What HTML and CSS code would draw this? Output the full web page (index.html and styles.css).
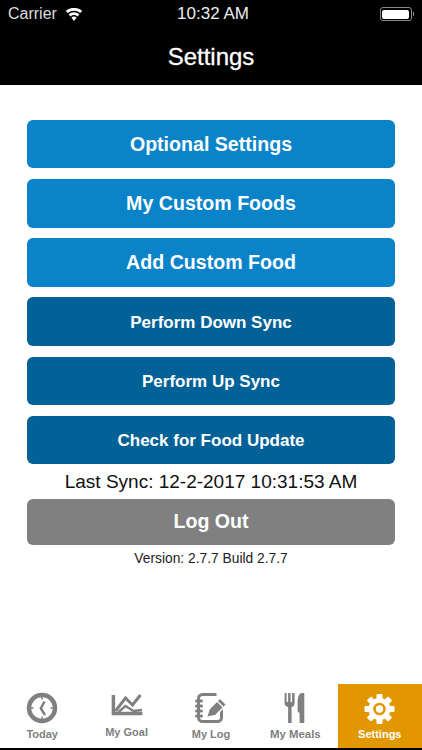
FILE: index.html
```html
<!DOCTYPE html>
<html lang="en">
<head>
    <meta charset="UTF-8">
    <meta name="viewport" content="width=device-width, initial-scale=1">
    <title>Settings</title>
    <link rel="stylesheet" href="styles.css">
</head>
<body>
    <div class="app">
        <header class="top-bar">
            <div class="status-bar">
                <div class="status-left">
                    <span>Carrier</span>
                    <svg class="wifi" viewBox="0 0 18 13" width="18" height="13">
                        <path fill="#fff" d="M9 13l-2.700-3.400a4.400 4.400 0 0 1 5.400 0z"/>
                        <path fill="#fff" d="M5.400 8.400L3.600 6.200a8.600 8.600 0 0 1 10.800 0l-1.800 2.200a5.800 5.800 0 0 0-7.200 0z"/>
                        <path fill="#fff" d="M2.700 5L.8 2.800a12.800 12.800 0 0 1 16.400 0L15.300 5a9.900 9.900 0 0 0-12.600 0z"/>
                    </svg>
                </div>
                <span class="status-time">10:32 AM</span>
                <div class="status-right">
                    <div class="battery"><div class="battery-level"></div></div>
                    <div class="battery-cap"></div>
                </div>
            </div>
            <h1 class="page-title">Settings</h1>
        </header>

        <main class="content">
            <button type="button" class="btn btn-light">Optional Settings</button>
            <button type="button" class="btn btn-light">My Custom Foods</button>
            <button type="button" class="btn btn-light">Add Custom Food</button>
            <button type="button" class="btn btn-dark">Perform Down Sync</button>
            <button type="button" class="btn btn-dark">Perform Up Sync</button>
            <button type="button" class="btn btn-dark">Check for Food Update</button>
            <p class="last-sync">Last Sync: 12-2-2017 10:31:53 AM</p>
            <button type="button" class="btn btn-grey">Log Out</button>
            <p class="version">Version: 2.7.7 Build 2.7.7</p>
        </main>

        <nav class="tab-bar">
            <div class="tab">
                <svg class="tab-icon" viewBox="0 0 32 32" width="32" height="32">
                    <circle cx="16" cy="16" r="13" fill="none" stroke="#808080" stroke-width="4.500"/>
                    <path fill="none" stroke="#808080" stroke-width="2.500" d="M18.500 9.500L14.800 16.500 19 23"/>
                    <path fill="none" stroke="#808080" stroke-width="1.500" d="M16 5v2.500M16 24.500V27M5 16h2.500M24.500 16H27"/>
                </svg>
                <span class="tab-label">Today</span>
            </div>
            <div class="tab tab-goal">
                <svg class="tab-icon" viewBox="0 0 32 32" width="32" height="32">
                    <path fill="none" stroke="#808080" stroke-width="3.500" d="M2.400 3v18.500h29"/>
                    <path fill="none" stroke="#808080" stroke-width="3" d="M4.500 19L14.500 6l7 7 8-10"/>
                    <path fill="none" stroke="#808080" stroke-width="2.500" d="M7.500 20l7-6 8 5 8.500-1"/>
                </svg>
                <span class="tab-label">My Goal</span>
            </div>
            <div class="tab">
                <svg class="tab-icon" viewBox="0 0 32 32" width="32" height="32">
                    <path fill="none" stroke="#808080" stroke-width="3" d="M26.500 17v8.500a4 4 0 0 1-4 4h-15a4 4 0 0 1-4-4v-19a4 4 0 0 1 4-4h14"/>
                    <path fill="none" stroke="#808080" stroke-width="3" stroke-linecap="round" d="M1.500 9h5M1.500 14h5M1.500 19h5M1.500 24h5"/>
                    <path fill="#808080" stroke="#fff" stroke-width="1.500" d="M11.500 25.500l2.500-8.500L25 6l6.500 6.500L20.500 23.500z"/>
                    <path fill="none" stroke="#fff" stroke-width="1.200" d="M22 9l6.500 6.500"/>
                </svg>
                <span class="tab-label">My Log</span>
            </div>
            <div class="tab">
                <svg class="tab-icon" viewBox="0 0 32 32" width="32" height="32">
                    <path fill="#808080" d="M5.600 1h2v9h1.500V1h2.500v9h1.500V1h2.500v10.500c0 2-1 3-3 3.500v16H9.100V15c-2-.5-3.500-1.500-3.500-3.500z"/>
                    <path fill="#808080" d="M23 1c-3.500 0-4.400 5-4.400 11v7l2 2.500V31h4.700V1z"/>
                </svg>
                <span class="tab-label tab-label-wide">My Meals</span>
            </div>
            <div class="tab tab-active">
                <svg class="tab-icon" viewBox="0 0 32 32" width="32" height="32">
                    <g fill="#fff">
                        <circle cx="15.500" cy="17" r="11"/>
                        <rect x="12.500" y="2" width="6" height="30" rx="1"/>
                        <rect x="12.500" y="2" width="6" height="30" rx="1" transform="rotate(45 15.500 17)"/>
                        <rect x="12.500" y="2" width="6" height="30" rx="1" transform="rotate(90 15.500 17)"/>
                        <rect x="12.500" y="2" width="6" height="30" rx="1" transform="rotate(135 15.500 17)"/>
                    </g>
                    <circle cx="15.500" cy="17" r="5" fill="#fff" stroke="#e29700" stroke-width="2.600"/>
                </svg>
                <span class="tab-label">Settings</span>
            </div>
        </nav>
    </div>
</body>
</html>
```

FILE: styles.css
```css
* {
    box-sizing: border-box;
}
body {
    margin: 0;
    font-family: "Liberation Sans", Arial, sans-serif;
    background-color: #fff;
}
.app {
    display: flex;
    flex-direction: column;
    width: 422px;
    height: 750px;
    overflow: hidden;
    border-bottom: 2px solid #000;
}
.top-bar {
    height: 85px;
    padding: 0 8px;
    background-color: #000;
    color: #fff;
}
.status-bar {
    display: flex;
    align-items: center;
    justify-content: space-between;
    height: 28px;
    font-size: 16px;
}
.status-left {
    display: flex;
    align-items: center;
    gap: 8px;
    width: 100px;
    color: #ddd;
}
.status-time {
    margin-left: 4px;
    font-size: 17px;
    color: #eee;
}
.status-right {
    display: flex;
    align-items: center;
    justify-content: flex-end;
    width: 100px;
}
.battery {
    width: 32px;
    height: 14px;
    padding: 1.500px;
    border: 1px solid #888;
    border-radius: 3px;
}
.battery-level {
    height: 100%;
    background-color: #fff;
    border-radius: 2px;
}
.battery-cap {
    width: 1px;
    height: 4px;
    margin-left: 1px;
    background-color: #888;
}
.page-title {
    margin: 0;
    padding-top: 4px;
    font-size: 24px;
    font-weight: 400;
    line-height: 50px;
    text-align: center;
    -webkit-text-stroke: 0.3px #fff;
}
.content {
    flex: 1;
    display: flex;
    flex-direction: column;
    padding: 34.800px 27px 0;
}
.btn {
    flex: none;
    height: 48.700px;
    margin-bottom: 10.500px;
    padding: 0;
    border: none;
    border-radius: 6px;
    color: #fff;
    font-family: inherit;
    font-weight: 700;
    font-size: 19.600px;
}
.btn-light {
    background-color: #0a83c9;
}
.btn-dark {
    padding-top: 2px;
    background-color: #026197;
    font-size: 17px;
}
.btn-grey {
    height: 46px;
    margin-bottom: 0;
    background-color: #808080;
}
.last-sync {
    margin: -10.500px 0 0;
    padding-top: 2px;
    font-size: 19px;
    line-height: 32.500px;
    text-align: center;
    color: #111;
}
.version {
    margin: 6px 0 0;
    font-size: 13.800px;
    line-height: 16px;
    text-align: center;
    color: #222;
}
.tab-bar {
    flex: none;
    display: grid;
    grid-template-columns: repeat(5, 1fr);
    height: 64px;
}
.tab {
    display: flex;
    flex-direction: column;
    align-items: center;
    padding-top: 8px;
    color: #808080;
}
.tab-icon {
    flex: none;
}
.tab-label {
    margin-top: 4px;
    font-size: 11px;
    font-weight: 700;
}
.tab-label-wide {
    font-size: 11.400px;
}
.tab-goal .tab-label {
    margin-top: 2px;
}
.tab-active {
    background-color: #e29700;
    color: #fff;
}
```
